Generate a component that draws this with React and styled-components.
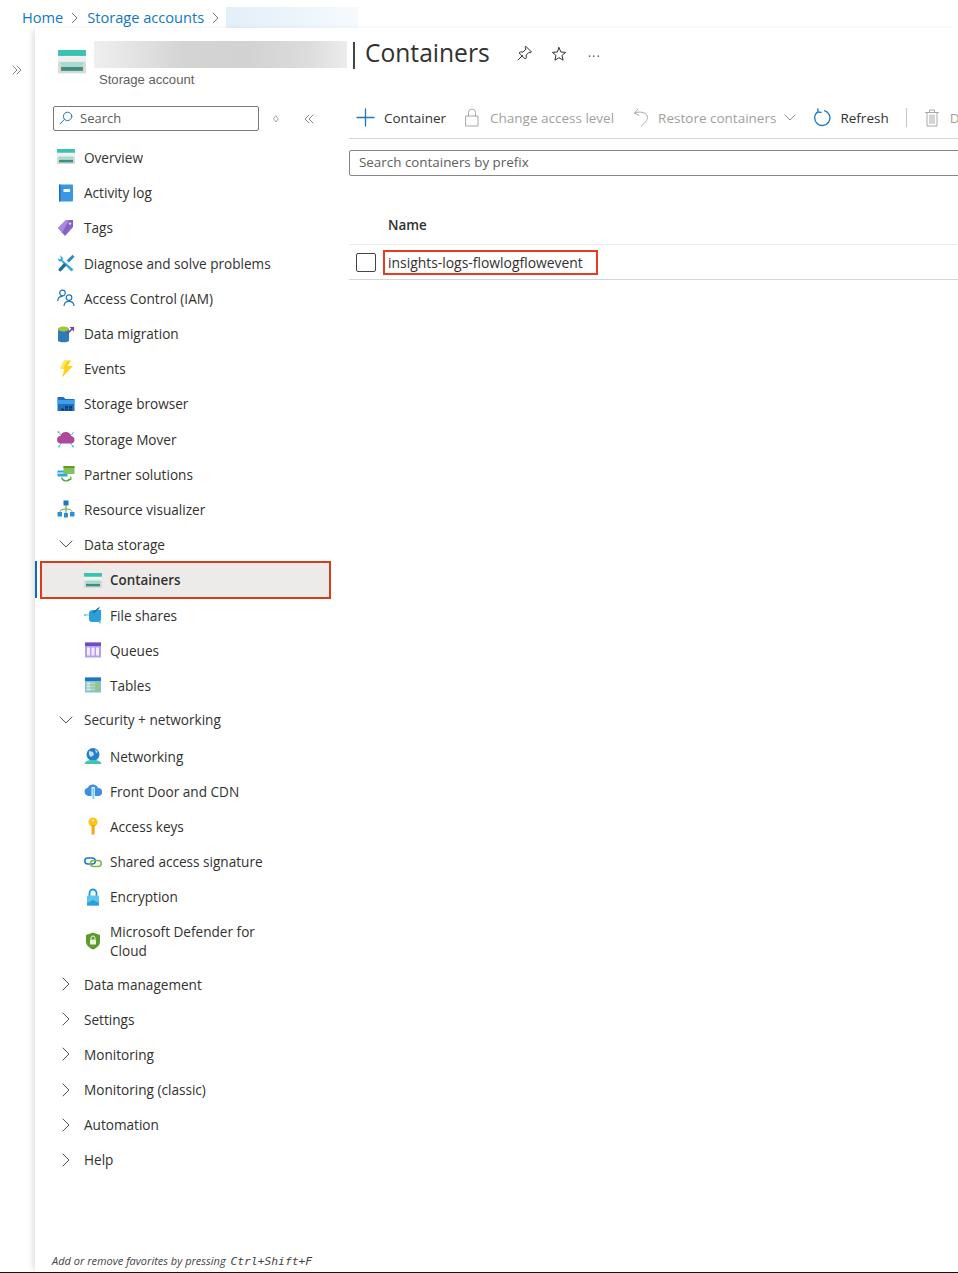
import React from "react";
import styled, { createGlobalStyle } from "styled-components";

const Global = createGlobalStyle`
  html, body { margin: 0; padding: 0; background: #fff; }
  * { box-sizing: border-box; }
  body { font-family: "Open Sans", "Noto Sans", sans-serif; color: #323130; }
`;

const Page = styled.div`
  width: 958px; height: 1273px; overflow: hidden; display: flex; flex-direction: column;
  border-bottom: 1px solid #111; background: #fff;
`;
const Crumbs = styled.nav`
  height: 28px; flex: none; display: flex; align-items: center; padding: 7px 0 0 22px; font-size: 14.6px; color: #0f78c2;
  font-family: "Open Sans", sans-serif;
`;
const CrumbLink = styled.span`padding-bottom: 2px;`;
const CrumbSep = styled.svg`width: 18px; height: 14px; margin: 0 3px; flex: none;`;
const CrumbBlur = styled.div`
  width: 132px; height: 21px; margin-left: -2px;
  background: linear-gradient(90deg, #e3eff9 0%, #edf5fb 55%, #f6fafd 100%);
`;
const Body = styled.div`flex: 1; min-height: 0; display: flex;`;
const Rail = styled.div`width: 35px; flex: none; padding: 30px 0 0 12px; color: #8a8886;`;
const Panel = styled.div`
  flex: 1; min-width: 0; display: flex; flex-direction: column; background: #fff;
  box-shadow: -4px 0 6px -2px rgba(0,0,0,.14);
`;
const Header = styled.header`
  height: 72px; flex: none; display: grid; grid-template-columns: 59px auto auto 1fr; align-items: start; padding: 13px 0 0 0;
`;
const HeaderIcon = styled.div`padding: 9px 0 0 23px; width: 59px;`;
const NameCol = styled.div`display: flex; flex-direction: column;`;
const NameBlur = styled.div`
  width: 253px; height: 27px;
  background: linear-gradient(90deg,#efefef 0%,#e4e4e4 15%,#d4d4d4 35%,#d2d2d2 60%,#dcdcdc 85%,#ececec 100%);
`;
const NameSub = styled.div`
  font-family: "Liberation Sans", Arial, sans-serif; font-size: 13.1px; color: #605e5c; padding: 4px 0 0 5px; line-height: 15px;
`;
const TitleWrap = styled.div`display: flex; align-items: center; height: 25px;`;
const Title = styled.h1`
  margin: 0 0 0 6px; font-weight: 400; font-size: 24.6px; color: #323130; line-height: 27px; white-space: nowrap;
  &::before { content: ""; display: inline-block; width: 2px; height: 27px; background: #444; margin-right: 10px; vertical-align: -7px; }
`;
const TitleActions = styled.div`display: flex; align-items: center; gap: 18px; margin-left: 26px; color: #323130;`;
const Dots = styled.span`font-size: 13px; letter-spacing: 1px; margin-left: 3px; position: relative; top: -2px; color: #555;`;

const Columns = styled.div`flex: 1; min-height: 0; display: grid; grid-template-columns: 314px 1fr;`;
const Side = styled.aside`display: flex; flex-direction: column; min-height: 0; padding-top: 6px;`;
const SearchRow = styled.div`display: flex; align-items: center; padding-left: 18px; height: 25px; margin-bottom: 9px;`;
const SearchBox = styled.div`
  width: 206px; height: 25px; border: 1px solid #7a7a7a; border-radius: 2px; display: flex; align-items: center; gap: 7px; padding: 0 0 1px 5px;
  font-size: 13px; color: #605e5c;
`;
const SideBtn = styled.span`display: flex; color: #8a8886; margin-left: ${p => p.$ml}px;`;
const NavList = styled.div`display: flex; flex-direction: column;`;
const Row = styled.div`
  height: ${p => p.$h || 35.2}px; display: flex; align-items: center; font-size: 13.6px; line-height: 19px;
  padding: ${p => p.$pt || 0}px 0 ${p => p.$pb || 0}px ${p => p.$indent}px; gap: ${p => p.$gap}px; color: #323130;
`;
const RowIcon = styled.span`width: 18px; height: 18px; display: flex; flex: none;`;
const GroupChevron = styled.span`width: 18px; height: 18px; display: flex; align-items: center; justify-content: center; color: #555; flex: none;`;
const SelectedRow = styled.div`
  height: 38px; margin-bottom: -2px; display: flex; position: relative; z-index: 1; padding-left: 5px;
  &::before { content: ""; position: absolute; left: 0; top: 0; bottom: 1px; width: 2px; background: #0f6cbd; }
`;
const SelectedInner = styled.div`
  width: 291px; height: 38px; border: 2px solid #da3b1a; background: #edebe9; display: flex; align-items: center; gap: 8px; padding-left: 42px;
  font-size: 13.4px; font-weight: 600; color: #323130;
`;
const Footer = styled.div`
  margin-top: auto; padding: 0 0 3px 17px; font-size: 11px; font-style: italic; color: #444; line-height: 15px; white-space: nowrap;
`;
const Keys = styled.span`font-family: "DejaVu Sans Mono", monospace; font-size: 11.3px; margin-left: 2px;`;

const Main = styled.main`min-width: 0; overflow: hidden; display: flex; flex-direction: column;`;
const Toolbar = styled.div`
  height: 39px; flex: none; display: flex; align-items: center; padding: 0 0 3px 7px; border-bottom: 1px solid #d6d6d6; white-space: nowrap;
  font-size: 13.5px;
`;
const Tool = styled.div`
  display: flex; align-items: center; gap: ${p => p.$gap || 8}px; margin-right: ${p => p.$mr || 0}px; flex: none;
  color: ${p => p.$off ? "#a19f9d" : "#323130"};
`;
const ToolDivider = styled.span`width: 1px; height: 19px; background: #c8c6c4; margin: 0 18px 0 17px; flex: none;`;
const Filter = styled.div`
  margin-top: 11px; height: 26px; border: 1px solid #8a8886; border-radius: 2px 0 0 2px; width: 640px; flex: none; display: flex; align-items: center;
  padding: 0 0 2px 9px; font-size: 13.4px; color: #605e5c; white-space: nowrap;
`;
const TableHead = styled.div`
  margin-top: 34px; height: 35px; flex: none; display: flex; align-items: center; padding: 0 0 4px 39px; font-size: 13.4px; font-weight: 600; color: #323130;
  border-bottom: 1px solid #ececec;
`;
const TableRow = styled.div`
  height: 35px; flex: none; display: flex; align-items: center; padding-left: 7px; border-bottom: 1px solid #d6d6d6; font-size: 13.9px;
`;
const Check = styled.span`width: 20px; height: 19px; border: 1px solid #444; border-radius: 2px; flex: none; margin-right: 7px;`;
const Marked = styled.span`
  width: 215px; height: 25px; border: 2px solid #e53c1f; display: flex; align-items: center; padding: 1px 0 0 3px; color: #323130; white-space: nowrap;
`;
const DefenderText = styled.span`display: block; width: 165px;`;

const Thin = ({ w = 12, h = 12, vb = "0 0 12 12", sw = 1, color = "currentColor", children }) => (
  <svg width={w} height={h} viewBox={vb} fill="none" stroke={color} strokeWidth={sw} strokeLinecap="round" strokeLinejoin="round">{children}</svg>
);
const DoubleRight = () => <Thin w={10} h={10} vb="0 0 10 10"><path d="M1 1l4 4-4 4M5 1l4 4-4 4" /></Thin>;
const DoubleLeft = () => <Thin w={10} h={10} vb="0 0 10 10"><path d="M5 1L1 5l4 4M9 1L5 5l4 4" /></Thin>;
const Chevron = ({ down, light }) => down
  ? <Thin w={light ? 12 : 14} h={light ? 7 : 8} vb="0 0 14 8" color={light ? "#777" : "currentColor"}><path d="M1 1l6 6 6-6" /></Thin>
  : <Thin w={8} h={14} vb="0 0 8 14"><path d="M1 1l6 6-6 6" /></Thin>;
const Sort = () => <Thin w={6} h={8} vb="0 0 8 10"><path d="M4 1l3 4-3 4-3-4z" /></Thin>;
const SearchIco = () => <Thin w={14} h={14} vb="0 0 14 14" color="#1b78bd"><circle cx="8.600" cy="5.400" r="4.200" /><path d="M5.400 8.400L1 13" /></Thin>;
const Pin = () => <Thin w={17} h={17} vb="0 0 17 17"><path d="M10 1.500l5.500 5.500-1.400.8-1-.6-3 3 .3 2.600-1.200 1.200-6-6 1.200-1.200 2.600.3 3-3-.6-1zM6.500 10.500L2 15" /></Thin>;
const Star = () => <Thin w={16} h={16} vb="0 0 16 16"><path d="M8 1.600l1.900 4.400 4.700.4-3.600 3.100 1.100 4.700L8 11.700l-4.100 2.500 1.100-4.700-3.600-3.100 4.700-.4z" /></Thin>;
const Plus = () => <Thin w={19} h={19} vb="0 0 19 19" color="#1b78bd" sw={1.300}><path d="M9.500 1v17M1 9.500h17" /></Thin>;
const Lock = () => <Thin w={14} h={19} vb="0 0 14 19" color="#a8a8a8"><rect x="1" y="8" width="12" height="10" /><path d="M3.500 8V4.500a3.500 3.500 0 017 0V8" /></Thin>;
const Undo = () => <Thin w={16} h={19} vb="0 0 16 19" color="#a8a8a8"><path d="M5 1L1.500 5 6 7.500M1.500 5C8 2.500 14.500 5 14.500 9.500c0 3-2.500 5-6 8.500" /></Thin>;
const Refresh = () => <Thin w={18} h={19} vb="0 0 18 19" color="#1b78bd" sw={1.300}><path d="M10.500 2.600A7.600 7.600 0 1 1 4 3.600M3.800 0.800L4 4l3.200.3" /></Thin>;
const Trash = () => <Thin w={14} h={18} vb="0 0 14 18" color="#a8a8a8"><path d="M0.500 3.500h13M4.500 3.500V1h5v2.500M2 3.500V17h10V3.500M5 6v8.500M7 6v8.500M9 6v8.500" /></Thin>;

const StorageIco = ({ s = 18 }) => (
  <svg width={s} height={s * 0.85} viewBox="0 0 28 24">
    <rect y="0" width="28" height="23.500" fill="#d8d8d8" />
    <rect y="0" width="28" height="6" fill="#37c2b1" />
    <rect y="6" width="28" height="6" fill="#f0f0f0" />
    <rect x="3" y="12" width="22" height="4" fill="#a6dccf" />
    <rect x="3" y="17" width="22" height="4" fill="#3a8f82" />
  </svg>
);
const I = ({ children }) => <svg width="18" height="18" viewBox="0 0 18 18">{children}</svg>;
const icons = {
  overview: <StorageIco />,
  log: <I><rect x="2" y="0.500" width="14" height="17" rx="1" fill="#3a97e2" /><rect x="2" y="0.500" width="1.500" height="17" fill="#1f6fb8" /><rect x="6.500" y="5" width="6.500" height="3" fill="#f0f7fd" /></I>,
  tags: <I><path d="M1 9l8-8h7v7l-8 9z" fill="#8661c5" /><path d="M1 9l8-8h3L5 14z" fill="#a88ae0" /><circle cx="13" cy="4.600" r="1.200" fill="#e7defa" /></I>,
  tools: <I><path d="M3 1l3 3-.6 2L16.500 15.500 14.500 17.500 4.200 7.200 2 7.500 0.700 4l2 1.600 1.200-1.200z" fill="#32a5dc" /><path d="M15.500 0.800l2 2-5.600 5.800-2.200-2z" fill="#2b8cc4" /><path d="M7 9l2.400 2.400-5 5.400a1.600 1.600 0 01-2.400-2.400z" fill="#1d6da6" /></I>,
  iam: <svg width="18" height="18" viewBox="0 0 18 18" fill="none" stroke="#1b78bd" strokeWidth="1.200"><circle cx="5.500" cy="4" r="2.800" /><path d="M0.800 12c0-3 2-4.600 4.700-4.600" /><circle cx="12" cy="8.600" r="2.800" /><path d="M7 17c.2-3 2-4.700 5-4.700s4.800 1.700 5 4.700" /></svg>,
  migrate: <I><path d="M1 4h11v12c-2 1.800-9 1.800-11 0z" fill="#2b7cb8" /><ellipse cx="6.500" cy="4" rx="5.500" ry="2.500" fill="#a4c639" /><path d="M10 9l6-6" stroke="#7b3fa8" strokeWidth="1.600" /><path d="M12.500 2H17v4.500z" fill="#7b3fa8" /></I>,
  events: <I><path d="M7 0.500h7L10.500 6H16L5 17.500 7.500 9H3z" fill="#fcd116" /><path d="M7 0.500h3L6 9H3z" fill="#ffe76a" /></I>,
  browser: <I><path d="M0.500 2h6l2 2h9v12H0.500z" fill="#1f6fbe" /><rect x="0.500" y="5" width="17" height="4" fill="#3da0e8" /><rect x="8" y="11" width="3" height="2" fill="#0b3d78" /><rect x="12" y="11" width="3" height="2" fill="#0b3d78" /><rect x="4" y="13.500" width="3" height="2" fill="#0b3d78" /><rect x="8" y="13.500" width="3" height="2" fill="#0b3d78" /><rect x="12" y="13.500" width="3" height="2" fill="#0b3d78" /></I>,
  mover: <I><path d="M4 5L1.500 2M14.500 5L16.500 2M4.500 13l-2.500 3.500M13.500 13l2.500 3.500" stroke="#41c7e0" strokeWidth="1" /><circle cx="1.500" cy="2" r="1" fill="#41c7e0" /><circle cx="2" cy="16.500" r="1" fill="#41c7e0" /><circle cx="16" cy="16.500" r="1" fill="#41c7e0" /><path d="M4 13.500a3.700 3.700 0 01-.5-7.400A5.600 5.600 0 0114.200 6a3.800 3.800 0 01.2 7.500z" fill="#b0479b" /></I>,
  partner: <I><rect x="0.500" y="5.500" width="10" height="6" fill="#29a9e0" /><rect x="0.500" y="7.500" width="10" height="1.200" fill="#e6f7ff" /><rect x="6.500" y="1" width="11" height="8" fill="#86c05a" /><rect x="6.500" y="1" width="11" height="2" fill="#5d9b2c" /><path d="M4.500 12.500c1 4 6.500 4.500 9 1.500M13.800 11.500v3h-3" fill="none" stroke="#4ea72e" strokeWidth="1.200" /></I>,
  viz: <I><rect x="6.500" y="0.500" width="5" height="5" fill="#1b78bd" /><rect x="0.500" y="12" width="4.500" height="4.500" fill="#2d8fd5" /><rect x="13" y="12" width="4.500" height="4.500" fill="#2d8fd5" /><rect x="7" y="13" width="4" height="4.500" fill="#2d8fd5" /><path d="M9 5.500v7.500M3 12c0-1.500 1.500-3 6-3s6 1.500 6 3" fill="none" stroke="#5ba82e" strokeWidth="1" /></I>,
  share: <I><path d="M0.500 9h6M13 3l3-2M14 14l2 2.500" stroke="#58c4ea" strokeWidth="1" /><circle cx="1" cy="9" r="1" fill="#58c4ea" /><circle cx="16" cy="16.500" r="1" fill="#58c4ea" /><path d="M5 7c0-2 2-3 4-3h8v9c0 2-1 3-3 3H8c-2 0-3-1-3-3z" fill="#2a9fd8" /><path d="M9 7l6-5" stroke="#1f6fa8" strokeWidth="1.400" /></I>,
  queue: <I><rect x="1" y="1.500" width="16" height="15" fill="#b79df0" /><rect x="1" y="1.500" width="16" height="3.500" fill="#6f4bc4" /><rect x="3" y="6.500" width="3" height="8" fill="#f3eeff" /><rect x="7.500" y="6.500" width="3" height="8" fill="#f3eeff" /><rect x="12" y="6.500" width="3" height="8" fill="#f3eeff" /></I>,
  table: <I><rect x="1" y="1.500" width="16" height="15" fill="#7cc0ec" /><rect x="1" y="1.500" width="16" height="3.500" fill="#1b78bd" /><rect x="2.500" y="6.500" width="4" height="2" fill="#e6efc8" /><rect x="7" y="6.500" width="4" height="2" fill="#c6d97a" /><rect x="11.500" y="6.500" width="4" height="2" fill="#a8c64d" /><rect x="2.500" y="9.500" width="4" height="2" fill="#e6efc8" /><rect x="7" y="9.500" width="4" height="2" fill="#c6d97a" /><rect x="11.500" y="9.500" width="4" height="2" fill="#a8c64d" /><rect x="2.500" y="12.500" width="4" height="2" fill="#e6efc8" /><rect x="7" y="12.500" width="4" height="2" fill="#c6d97a" /><rect x="11.500" y="12.500" width="4" height="2" fill="#a8c64d" /></I>,
  net: <I><circle cx="9" cy="7.500" r="6.500" fill="#2a7fc9" /><path d="M5 4l4 1 1 3-3 2-2-2zM11 2l3 3-2 1z" fill="#bfe3f7" /><path d="M0.500 17c1-3 3-4 8.500-4s7.500 1 8.500 4z" fill="#3cc4b4" /></I>,
  cdn: <I><path d="M4.500 14a4.200 4.200 0 01-.6-8.300A5.500 5.500 0 0114 6a4 4 0 01.2 8z" fill="#3e8fe0" /><rect x="7.500" y="5" width="3.500" height="12" rx="1" fill="#fff" opacity=".9" /><rect x="8.500" y="6" width="1.800" height="11" fill="#7fc8f5" /></I>,
  key: <I><circle cx="9" cy="5" r="4.600" fill="#fcc419" /><rect x="7.600" y="8" width="3" height="9.500" fill="#f5a60d" /><circle cx="9" cy="3.600" r="1.100" fill="#fff3c2" /></I>,
  sas: <svg width="18" height="18" viewBox="0 0 18 18" fill="none" strokeWidth="1.500"><rect x="0.800" y="5" width="10.500" height="6" rx="3" stroke="#1b78bd" /><rect x="6.500" y="7.500" width="10.700" height="6" rx="3" stroke="#7ab648" /></svg>,
  enc: <I><path d="M5.500 8V5a3.500 3.500 0 017 0v3" fill="none" stroke="#1b9ad6" strokeWidth="1.800" /><rect x="3" y="7.500" width="12" height="10" rx="1" fill="#5cc6ee" /><path d="M3 15l6-3 6 3v2.500H3z" fill="#2d9fd8" /></I>,
  defender: <I><path d="M9 0.500l7 2.500v6.500c0 4-3.500 6.500-7 8-3.500-1.500-7-4-7-8V3z" fill="#5e9b2e" /><rect x="6" y="7.500" width="6" height="5" rx=".6" fill="#eaf5dc" /><path d="M7 7.500V6a2 2 0 014 0v1.500" fill="none" stroke="#eaf5dc" strokeWidth="1" /></I>,
};

const top = [
  ["overview", "Overview"], ["log", "Activity log"], ["tags", "Tags"], ["tools", "Diagnose and solve problems"],
  ["iam", "Access Control (IAM)"], ["migrate", "Data migration"], ["events", "Events"], ["browser", "Storage browser"],
  ["mover", "Storage Mover"], ["partner", "Partner solutions"], ["viz", "Resource visualizer"],
];
const storage = [["share", "File shares"], ["queue", "Queues"], ["table", "Tables"]];
const security = [["net", "Networking"], ["cdn", "Front Door and CDN"], ["key", "Access keys"], ["sas", "Shared access signature"], ["enc", "Encryption"]];
const collapsed = ["Data management", "Settings", "Monitoring", "Monitoring (classic)", "Automation", "Help"];

const Item = ({ ic, label, indent = 22, gap = 9, h, pt }) => (
  <Row $indent={indent} $gap={gap} $h={h} $pt={pt}><RowIcon>{icons[ic]}</RowIcon><span>{label}</span></Row>
);
const Group = ({ label, open, h, pb }) => (
  <Row $indent={22} $gap={9} $h={h} $pb={pb}><GroupChevron><Chevron down={open} /></GroupChevron><span>{label}</span></Row>
);

export default function App() {
  return (
    <Page>
      <Global />
      <Crumbs>
        <CrumbLink>Home</CrumbLink>
        <CrumbSep viewBox="0 0 18 14" fill="none" stroke="#777"><path d="M6 2l5 5-5 5" /></CrumbSep>
        <CrumbLink>Storage accounts</CrumbLink>
        <CrumbSep viewBox="0 0 18 14" fill="none" stroke="#777"><path d="M6 2l5 5-5 5" /></CrumbSep>
        <CrumbBlur />
      </Crumbs>
      <Body>
        <Rail><DoubleRight /></Rail>
        <Panel>
          <Header>
            <HeaderIcon><StorageIco s={28} /></HeaderIcon>
            <NameCol><NameBlur /><NameSub>Storage account</NameSub></NameCol>
            <TitleWrap>
              <Title>Containers</Title>
              <TitleActions><Pin /><Star /><Dots>...</Dots></TitleActions>
            </TitleWrap>
          </Header>
          <Columns>
            <Side>
              <SearchRow>
                <SearchBox><SearchIco /><span>Search</span></SearchBox>
                <SideBtn $ml={14}><Sort /></SideBtn>
                <SideBtn $ml={25}><DoubleLeft /></SideBtn>
              </SearchRow>
              <NavList>
                {top.map(([ic, l]) => <Item key={l} ic={ic} label={l} />)}
                <Group label="Data storage" open h={34.4} />
                <SelectedRow>
                  <SelectedInner><StorageIco /><span>Containers</span></SelectedInner>
                </SelectedRow>
                {storage.map(([ic, l]) => <Item key={l} ic={ic} label={l} indent={49} gap={8} />)}
                <Group label="Security + networking" open h={35.5} pb={2} />
                {security.map(([ic, l]) => <Item key={l} ic={ic} label={l} indent={49} gap={8} />)}
                <Item ic="defender" indent={49} gap={8} h={52} pt={2} label={<DefenderText>Microsoft Defender for Cloud</DefenderText>} />
                {collapsed.map(l => <Group key={l} label={l} />)}
              </NavList>
              <Footer>Add or remove favorites by pressing <Keys>Ctrl+Shift+F</Keys></Footer>
            </Side>
            <Main>
              <Toolbar>
                <Tool $gap={9} $mr={19}><Plus /><span>Container</span></Tool>
                <Tool $off $gap={11} $mr={19}><Lock /><span>Change access level</span></Tool>
                <Tool $off $gap={9} $mr={8}><Undo /><span>Restore containers</span></Tool>
                <Tool $mr={18}><Chevron down light /></Tool>
                <Tool $gap={8}><Refresh /><span>Refresh</span></Tool>
                <ToolDivider />
                <Tool $off $gap={11}><Trash /><span>Delete</span></Tool>
              </Toolbar>
              <Filter>Search containers by prefix</Filter>
              <TableHead>Name</TableHead>
              <TableRow><Check /><Marked>insights-logs-flowlogflowevent</Marked></TableRow>
            </Main>
          </Columns>
        </Panel>
      </Body>
    </Page>
  );
}
